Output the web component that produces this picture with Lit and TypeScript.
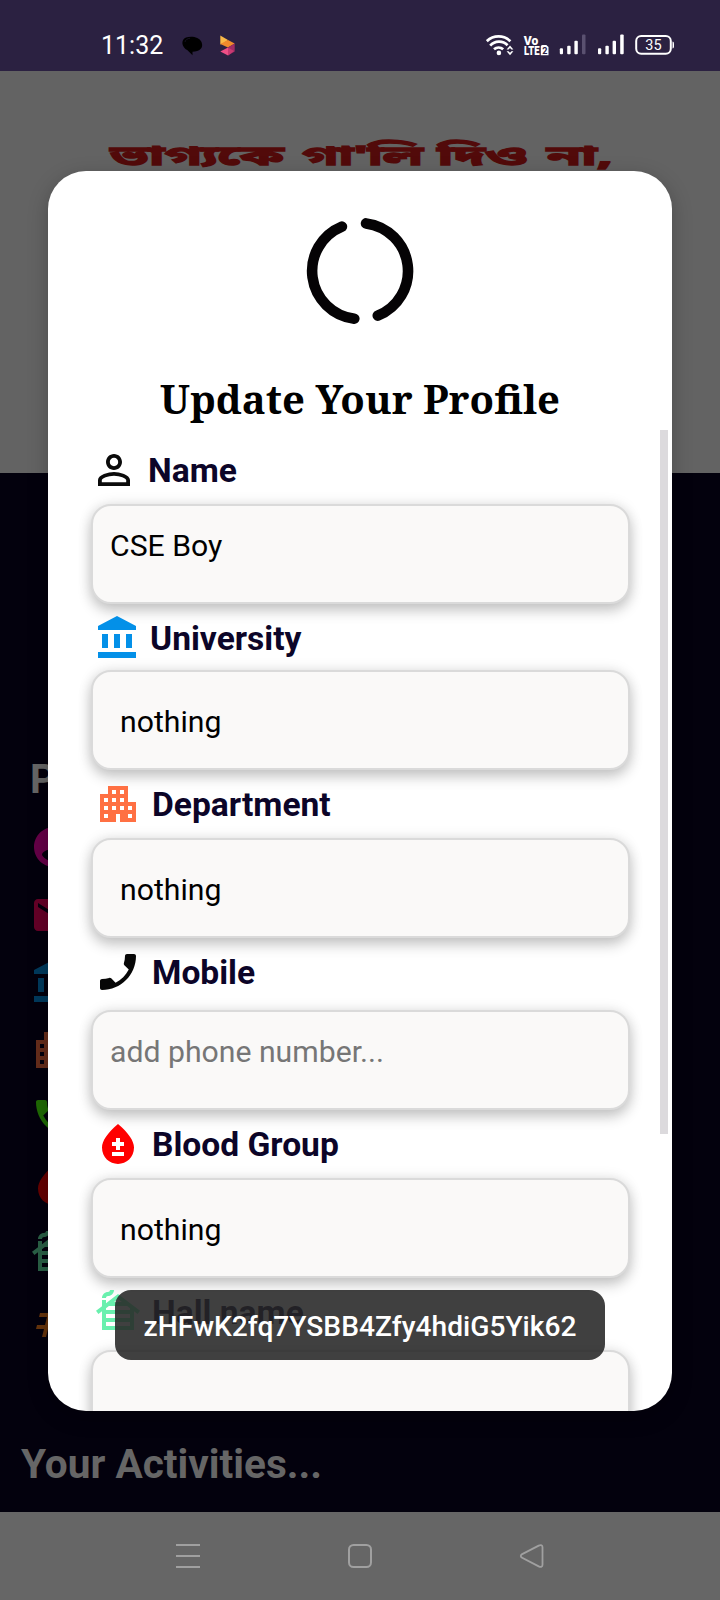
import { LitElement, html, css, svg } from "lit";
import { customElement, property } from "lit/decorators.js";
import { classMap } from "lit/directives/class-map.js";

const ICONS: Record<string, string> = {
  person:
    "M12 5.9c1.16 0 2.1.94 2.1 2.1s-.94 2.1-2.1 2.1S9.9 9.16 9.9 8s.94-2.1 2.1-2.1m0 9c2.97 0 6.1 1.46 6.1 2.1v1.1H5.9V17c0-.64 3.13-2.1 6.1-2.1M12 4C9.79 4 8 5.79 8 8s1.79 4 4 4 4-1.79 4-4-1.79-4-4-4zm0 9c-2.67 0-8 1.34-8 4v3h16v-3c0-2.66-5.33-4-8-4z",
  bank: "M4 10v7h3v-7H4zm6 0v7h3v-7h-3zM2 22h19v-3H2v3zm14-12v7h3v-7h-3zm-4.5-9L2 6v2h19V6l-9.5-5z",
  apartment:
    "M17 11V3H7v4H3v14h8v-4h2v4h8V11h-4zM7 19H5v-2h2v2zm0-4H5v-2h2v2zm0-4H5V9h2v2zm4 4H9v-2h2v2zm0-4H9V9h2v2zm0-4H9V5h2v2zm4 8h-2v-2h2v2zm0-4h-2V9h2v2zm0-4h-2V5h2v2zm4 12h-2v-2h2v2zm0-4h-2v-2h2v2z",
  handset:
    "M17.38 10.79l-2.2-2.2c-.28-.28-.36-.67-.25-1.02.37-1.12.57-2.32.57-3.57 0-.55.45-1 1-1H20c.55 0 1 .45 1 1 0 9.39-7.61 17-17 17-.55 0-1-.45-1-1v-3.49c0-.55.45-1 1-1 1.24 0 2.45-.2 3.57-.57.35-.12.75-.03 1.02.24l2.2 2.2c2.83-1.45 5.15-3.76 6.59-6.59z",
  phone:
    "M6.62 10.79c1.44 2.83 3.76 5.14 6.59 6.59l2.2-2.2c.27-.27.67-.36 1.02-.24 1.12.37 2.33.57 3.57.57.55 0 1 .45 1 1V20c0 .55-.45 1-1 1-9.39 0-17-7.61-17-17 0-.55.45-1 1-1h3.5c.55 0 1 .45 1 1 0 1.25.2 2.45.57 3.57.11.35.03.74-.25 1.02l-2.2 2.2z",
  blood:
    "M12 2c-5.33 4.55-8 8.48-8 11.8 0 4.98 3.8 8.2 8 8.2s8-3.22 8-8.2c0-3.32-2.67-7.25-8-11.8zm3 16H9v-2h6v2zm0-5h-2v2h-2v-2H9v-2h2V9h2v2h2v2z",
  cabin:
    "M10 1c0 1.66-1.34 3-3 3-.55 0-1 .45-1 1H4c0-1.66 1.34-3 3-3 .55 0 1-.45 1-1h2zm2 2L6 7.58V6H4v3.11L1 11.4l1.21 1.59L4 11.62V21h16v-9.38l1.79 1.36L23 11.4 12 3zm1.94 4h-3.89L12 5.52 13.94 7zm-6.5 2h9.12L18 10.1v.9H6v-.9L7.44 9zM18 13v2H6v-2h12zM6 19v-2h12v2H6z",
  account:
    "M12 2C6.48 2 2 6.48 2 12s4.48 10 10 10 10-4.48 10-10S17.52 2 12 2zm0 3c1.66 0 3 1.34 3 3s-1.34 3-3 3-3-1.34-3-3 1.34-3 3-3zm0 14.2c-2.5 0-4.71-1.28-6-3.22.03-1.99 4-3.08 6-3.08 1.99 0 5.97 1.09 6 3.08-1.29 1.94-3.5 3.22-6 3.22z",
  mail: "M20 4H4c-1.1 0-1.99.9-1.99 2L2 18c0 1.1.9 2 2 2h16c1.1 0 2-.9 2-2V6c0-1.1-.9-2-2-2zm0 4l-8 5-8-5V6l8 5 8-5v2z",
  hash: "M20.5 10L21 8h-4l1-4h-2l-1 4h-4l1-4h-2L9 8H5l-.5 2h4l-1 4h-4L3 16h4l-1 4h2l1-4h4l-1 4h2l1-4h4l.5-2h-4l1-4h4zm-7 4h-4l1-4h4l-1 4z",
};

@customElement("mi-icon")
class MiIcon extends LitElement {
  @property() name = "";
  static styles = css`
    :host { display: block; width: 48px; height: 48px; flex: none; }
    svg { display: block; }
  `;
  render() {
    return html`<svg width="48" height="48" viewBox="0 0 24 24" fill="currentColor"><path d=${ICONS[this.name]}></path></svg>`;
  }
}

@customElement("status-bar")
class StatusBar extends LitElement {
  static styles = css`
    :host { display: flex; height: 71px; box-sizing: border-box; padding: 32px 42px 0 101px; background: #2b2141; align-items: flex-start; }
    .time { font: 400 25px/26px Roboto, sans-serif; color: #fff; width: 79px; padding-top: 1px; }
    .left { flex: none; }
    .right { margin-left: auto; flex: none; }
    text { font-family: Roboto, sans-serif; fill: #fff; }
    .vo { font-weight: 900; }
    .sim { font-weight: 700; fill: #2b2141; }
  `;
  bars(x: number, last: string) {
    return svg`
      <rect x=${x} y="16.300" width="3.200" height="5.900" rx="1" fill="#fff"></rect>
      <rect x=${x + 7.4} y="13.800" width="3.400" height="8.400" rx="1" fill="#fff"></rect>
      <rect x=${x + 14.6} y="8.800" width="3.400" height="13.400" rx="1" fill="#fff"></rect>
      <rect x=${x + 22.2} y="2.500" width="3.500" height="19.700" rx="1" fill=${last}></rect>`;
  }
  render() {
    return html`
      <div class="time">11:32</div>
      <svg class="left" width="60" height="26" viewBox="180 32 60 26">
        <path d="M186 37.500c5-1.500 13-1 15.500 4.500 2.500 6-2 9.500-9 9.800v3.500l-5-5c-6-3-7-10.500-1.500-12.800z" fill="#000"></path>
        <path d="M185 42c.5-2.300 2.500-3.500 5-3.700" fill="none" stroke="#2b2141" stroke-width=".5"></path>
        <path d="M220.300 35.500l7.700 4.500-4 3-3.700 1.500z" fill="#f9b847"></path>
        <path d="M228 40l6.700 3.500-6.700 4-7.700-3.500z" fill="#f08a2c"></path>
        <path d="M234.700 43.500v8l-6.700 4v-8z" fill="#a02c64"></path>
        <path d="M220.300 51.500l7.700-4v8z" fill="#ee4f86"></path>
        <path d="M228 47.500l6 3.500-6 4.500z" fill="#c93a72"></path>
      </svg>
      <svg class="right" width="192" height="26" viewBox="0 0 192 26">
        <g fill="none" stroke="#fff" stroke-width="2.700">
          <path d="M.8 9.200a17 17 0 0 1 23.600 0"></path>
          <path d="M4.200 13.600a12 12 0 0 1 17.400-.4"></path>
          <path d="M8 17.300a7 7 0 0 1 9.200 0"></path>
        </g>
        <circle cx="12.900" cy="20.900" r="2.300" fill="#fff"></circle>
        <path d="M20.600 17.500l3.400-4 3.400 4h-2l-1.400-1.500-1.400 1.500zM20.600 19.200l3.400 4 3.400-4h-2l-1.400 1.500-1.400-1.500z" fill="#fff"></path>
        <text class="vo" x="37.700" y="12.600" font-size="13.500" textLength="14.500" lengthAdjust="spacingAndGlyphs">Vo</text>
        <text class="vo" x="38" y="23.200" font-size="13.500" textLength="15.500" lengthAdjust="spacingAndGlyphs">LTE</text>
        <path d="M54.800 14.500q0-1.500 1.500-1.500h4l2.200 2v8.200h-7.700z" fill="#fff"></path>
        <text class="sim" x="56.200" y="21.700" font-size="9">2</text>
        ${this.bars(73.8, "#5a5170")} ${this.bars(112, "#fff")}
        <rect x="150.200" y="4" width="34.600" height="17.800" rx="5" fill="none" stroke="#fff" stroke-width="2"></rect>
        <path d="M186.500 9.500q1.500 0 1.500 2v3q0 2-1.500 2z" fill="#fff"></path>
        <text x="167.500" y="18" font-size="14.500" text-anchor="middle">35</text>
      </svg>`;
  }
}

type Field = {
  id: string;
  icon: string;
  color: string;
  label: string;
  value: string;
  input?: boolean;
  hint?: boolean;
};

const FIELDS: Field[] = [
  { id: "name", icon: "person", color: "#0b0b0b", label: "Name", value: "CSE Boy", input: true },
  { id: "university", icon: "bank", color: "#0390e8", label: "University", value: "nothing" },
  { id: "department", icon: "apartment", color: "#ff7043", label: "Department", value: "nothing" },
  { id: "mobile", icon: "handset", color: "#070707", label: "Mobile", value: "add phone number...", input: true, hint: true },
  { id: "blood", icon: "blood", color: "#ff0000", label: "Blood Group", value: "nothing" },
  { id: "hall", icon: "cabin", color: "#69f0ae", label: "Hall name", value: "" },
];

const ROWS: [string, string][] = [
  ["account", "#650047"],
  ["mail", "#650027"],
  ["bank", "#013a5d"],
  ["apartment", "#662d1b"],
  ["phone", "#1f6a04"],
  ["blood", "#660000"],
  ["cabin", "#2a6046"],
  ["hash", "#66340c"],
];

@customElement("app-root")
class AppRoot extends LitElement {
  static styles = css`
    :host { display: block; position: relative; width: 720px; height: 1600px; overflow: hidden; font-family: Roboto, sans-serif; }
    .page { display: flex; flex-direction: column; height: 1600px; }
    .hero { height: 402px; background: #636363; flex: none; }
    .hero svg { display: block; }
    .quote { font-family: "Noto Sans Bengali", "Noto Serif Bengali", "Noto Sans", sans-serif; font-weight: 700; font-size: 26.500px; fill: #520a0a; stroke: #520a0a; stroke-width: 1.300; }
    .body { flex: 1; background: #03010d; display: flex; flex-direction: column; padding: 281px 20px 0 30px; color: #666; }
    .heading { font: 700 40px/50px Roboto, sans-serif; padding-top: 1px; height: 50px; box-sizing: border-box; }
    .rows { padding-top: 9px; }
    .row { height: 67.700px; display: flex; align-items: center; }
    .activities { font: 700 40.600px/50px Roboto, sans-serif; margin: 84.500px 0 0 -9px; }
    .nav { height: 88px; flex: none; background: #666; }
    .nav svg { display: block; }

    .dialog { position: absolute; left: 48px; top: 171px; width: 624px; height: 1240px; box-sizing: border-box; border-radius: 38px; background: #fff; overflow: hidden; display: flex; flex-direction: column; }
    .shade { position: absolute; left: 48px; top: 171px; width: 624px; height: 1240px; border-radius: 38px; box-shadow: 0 6px 20px rgba(0, 0, 0, 0.25); }
    .spinner { display: block; margin: 40px auto 0; flex: none; }
    .title { margin: 0; height: 99px; flex: none; }
    .scroller { display: flex; justify-content: space-between; flex: 1; min-height: 0; }
    .fields { padding-left: 42.500px; width: 539px; }
    .thumb { width: 8px; height: 704px; background: #dcdadd; margin-right: 4px; }
    .label { display: flex; align-items: flex-start; box-sizing: border-box; padding: 10px 0 0 3.500px; gap: 10px; height: 68px; color: #0c0528; font: 700 33.600px/48px Roboto, sans-serif; }
    .label span { padding-top: 1px; }
    .label.name { height: 74px; padding: 16px 0 0; margin-left: -.5px; }
    .label.university { height: 66px; gap: 8px; }
    .label.mobile, .label.hall { height: 72px; }
    .box { height: 100px; box-sizing: border-box; border: 2px solid #dadada; border-radius: 20px; background: #faf9f8; box-shadow: 0 7px 14px rgba(0, 0, 0, 0.2), 0 0 14px rgba(0, 0, 0, 0.1); font: 400 30.200px/40px Roboto, sans-serif; color: #000; padding: 30px 0 0 27.500px; }
    .box.input { padding: 20px 0 0 17.500px; }
    .box.hint { color: #767676; }
    .toast { position: absolute; left: 115px; top: 1290px; width: 490px; height: 70px; border-radius: 16px; background: rgba(38, 38, 38, 0.88); color: #fff; display: flex; align-items: center; justify-content: center; font: 500 28.150px/40px Roboto, sans-serif; padding-top: 3px; box-sizing: border-box; }
    .titletext { font: 700 40.600px "Noto Serif", "Droid Serif", "DejaVu Serif", serif; }
  `;

  render() {
    return html`
      <div class="page">
        <status-bar></status-bar>
        <div class="hero">
          <svg width="720" height="130" viewBox="0 0 720 130">
            <text class="quote" x="110.500" y="93.500" textLength="173" lengthAdjust="spacingAndGlyphs">ভাগ্যকে</text>
            <text class="quote" x="302" y="93.500" textLength="121" lengthAdjust="spacingAndGlyphs">গা'লি</text>
            <text class="quote" x="437.500" y="93.500" textLength="90" lengthAdjust="spacingAndGlyphs">দিও</text>
            <text class="quote" x="547" y="93.500" textLength="66" lengthAdjust="spacingAndGlyphs">না,</text>
          </svg>
        </div>
        <div class="body">
          <div class="heading">P</div>
          <div class="rows">
            ${ROWS.map(
              ([icon, color]) => html`<div class="row"><mi-icon name=${icon} style="color:${color}"></mi-icon></div>`
            )}
          </div>
          <div class="activities">Your Activities...</div>
        </div>
        <div class="nav">
          <svg width="720" height="88" viewBox="0 0 720 88" fill="none" stroke="#a0a0a0" stroke-width="2">
            <path d="M176 33h24M176 44h24M176 55h24"></path>
            <rect x="349" y="33" width="22" height="22" rx="4.500"></rect>
            <path d="M521.700 42.400l17-8.800q3.700-1.600 3.800 1.800v17.200q-.1 3.400-3.800 1.800l-17-8.800q-1.800-1.600 0-3.200z" stroke-width="1.800"></path>
          </svg>
        </div>
      </div>
      <div class="shade"></div>
      <div class="dialog">
        <svg class="spinner" width="120" height="120" viewBox="300 211 120 120" fill="none" stroke="#050305" stroke-width="10.600" stroke-linecap="round">
          <path d="M341.900 226.600A48 48 0 0 0 354.300 318.650"></path>
          <path d="M366.050 223.400A48 48 0 0 1 377.800 315.600"></path>
        </svg>
        <svg class="title" width="624" height="99" viewBox="48 331 624 99">
          <text class="titletext" x="160" y="414" textLength="400" lengthAdjust="spacingAndGlyphs">Update Your Profile</text>
        </svg>
        <div class="scroller">
          <div class="fields">
            ${FIELDS.map(
              (f) => html`
                <div class="label ${f.id}"><mi-icon name=${f.icon} style="color:${f.color}"></mi-icon><span>${f.label}</span></div>
                <div class=${classMap({ box: true, input: !!f.input, hint: !!f.hint })}>${f.value}</div>
              `
            )}
          </div>
          <div class="thumb"></div>
        </div>
      </div>
      <div class="toast">zHFwK2fq7YSBB4Zfy4hdiG5Yik62</div>
    `;
  }
}
